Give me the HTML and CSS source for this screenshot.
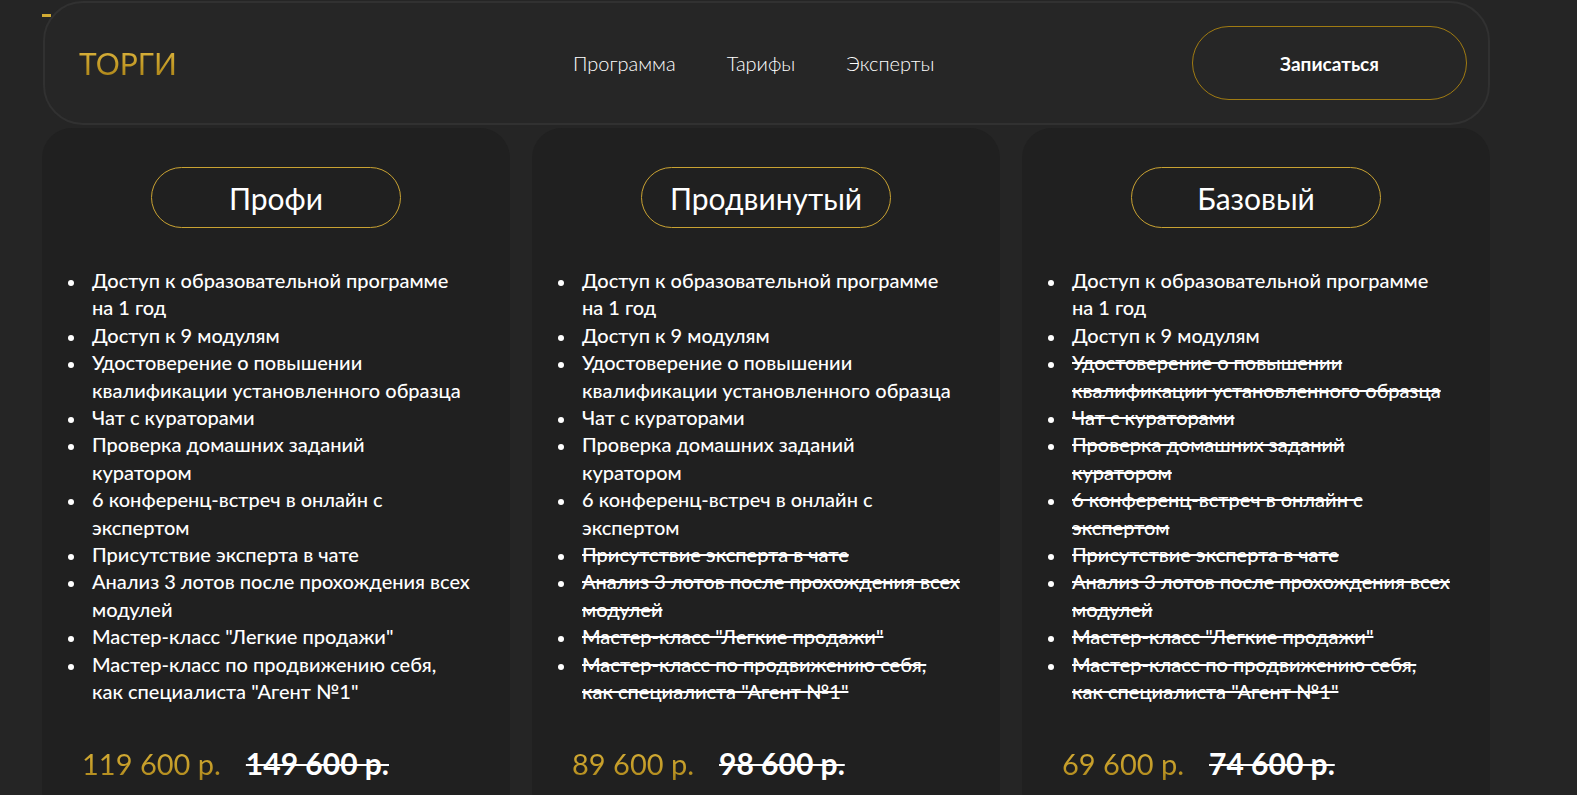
FILE: index.html
```html
<!DOCTYPE html>
<html lang="ru">
<head>
<meta charset="utf-8">
<title>Тарифы</title>
<link rel="stylesheet" href="styles.css">
</head>
<body>
<div class="page">
  <div class="peek"></div>
  <header class="topbar">
    <div class="logo">ТОРГИ</div>
    <nav class="nav">
      <a href="#">Программа</a>
      <a href="#">Тарифы</a>
      <a href="#">Эксперты</a>
    </nav>
    <a class="cta" href="#">Записаться</a>
  </header>

  <section class="plans">
    <article class="plan">
      <div class="plan-title">Профи</div>
      <ul class="features">
        <li>Доступ к образовательной программе<br>на 1 год</li>
        <li>Доступ к 9 модулям</li>
        <li>Удостоверение о повышении<br>квалификации установленного образца</li>
        <li>Чат с кураторами</li>
        <li>Проверка домашних заданий<br>куратором</li>
        <li>6 конференц-встреч в онлайн с<br>экспертом</li>
        <li>Присутствие эксперта в чате</li>
        <li>Анализ 3 лотов после прохождения всех<br>модулей</li>
        <li>Мастер-класс "Легкие продажи"</li>
        <li>Мастер-класс по продвижению себя,<br>как специалиста "Агент №1"</li>
      </ul>
      <div class="price"><span class="now">119 600 р.</span><s class="old">149 600 р.</s></div>
    </article>

    <article class="plan">
      <div class="plan-title">Продвинутый</div>
      <ul class="features">
        <li>Доступ к образовательной программе<br>на 1 год</li>
        <li>Доступ к 9 модулям</li>
        <li>Удостоверение о повышении<br>квалификации установленного образца</li>
        <li>Чат с кураторами</li>
        <li>Проверка домашних заданий<br>куратором</li>
        <li>6 конференц-встреч в онлайн с<br>экспертом</li>
        <li class="off">Присутствие эксперта в чате</li>
        <li class="off">Анализ 3 лотов после прохождения всех<br>модулей</li>
        <li class="off">Мастер-класс "Легкие продажи"</li>
        <li class="off">Мастер-класс по продвижению себя,<br>как специалиста "Агент №1"</li>
      </ul>
      <div class="price"><span class="now">89 600 р.</span><s class="old">98 600 р.</s></div>
    </article>

    <article class="plan">
      <div class="plan-title">Базовый</div>
      <ul class="features">
        <li>Доступ к образовательной программе<br>на 1 год</li>
        <li>Доступ к 9 модулям</li>
        <li class="off">Удостоверение о повышении<br>квалификации установленного образца</li>
        <li class="off">Чат с кураторами</li>
        <li class="off">Проверка домашних заданий<br>куратором</li>
        <li class="off">6 конференц-встреч в онлайн с<br>экспертом</li>
        <li class="off">Присутствие эксперта в чате</li>
        <li class="off">Анализ 3 лотов после прохождения всех<br>модулей</li>
        <li class="off">Мастер-класс "Легкие продажи"</li>
        <li class="off">Мастер-класс по продвижению себя,<br>как специалиста "Агент №1"</li>
      </ul>
      <div class="price"><span class="now">69 600 р.</span><s class="old">74 600 р.</s></div>
    </article>
  </section>
</div>
</body>
</html>
```

FILE: styles.css
```css
* { box-sizing: border-box; }

html, body {
  margin: 0;
  padding: 0;
  background: #252525;
  font-family: Lato, "Noto Sans", "DejaVu Sans", sans-serif;
  color: #ffffff;
  overflow: hidden;
}

.page {
  position: relative;
  width: 1448px;
  margin-left: 42px;
  padding-top: 1px;
}

.peek {
  position: absolute;
  left: 0;
  top: 14px;
  width: 9px;
  height: 3px;
  background: #d2ab33;
  z-index: 0;
}

.topbar {
  position: relative;
  z-index: 1;
  height: 124px;
  margin-left: 1px;
  width: 1447px;
  border: 2px solid #313131;
  border-radius: 40px;
  background: #262626;
  display: flex;
  align-items: center;
  padding: 0 21px 0 34px;
}

.logo {
  width: 494px;
  flex-shrink: 0;
  font-size: 30px;
  font-weight: 400;
  background: linear-gradient(180deg, #dcb53f 0%, #c39a26 55%, #a98318 100%);
  -webkit-background-clip: text;
  background-clip: text;
  color: transparent;
  line-height: 1;
  padding-bottom: 1px;
}

.nav {
  display: flex;
  gap: 51px;
}

.nav a {
  color: #ffffff;
  text-decoration: none;
  font-size: 20px;
  font-weight: 300;
}

.cta {
  margin-left: auto;
  width: 275px;
  height: 74px;
  border: 1px solid #a07b12;
  border-radius: 37px;
  display: flex;
  align-items: center;
  justify-content: center;
  color: #ffffff;
  text-decoration: none;
  font-size: 19px;
  font-weight: 700;
}

.plans {
  margin-top: 3px;
  display: grid;
  grid-template-columns: repeat(3, 1fr);
  gap: 22px;
}

.plan {
  background: #202020;
  border-radius: 30px;
  padding: 39px 0 40px 0;
  display: flex;
  flex-direction: column;
}

.plan-title {
  align-self: center;
  width: 250px;
  height: 61px;
  border: 1px solid #c9a232;
  border-radius: 31px;
  display: flex;
  align-items: center;
  justify-content: center;
  font-size: 30px;
  font-weight: 400;
  color: #ffffff;
}

.features {
  list-style: none;
  margin: 39px 0 0 0;
  padding: 0 0 0 50px;
  font-size: 20px;
  font-weight: 500;
  line-height: 27.4px;
  white-space: nowrap;
}

.features li {
  position: relative;
}

.features li::before {
  content: "";
  position: absolute;
  left: -24px;
  top: 13px;
  width: 6px;
  height: 6px;
  border-radius: 50%;
  background: #ffffff;
}

.features li.off {
  text-decoration: line-through;
  text-decoration-thickness: 2px;
}

.price {
  margin-top: 39px;
  padding-left: 40px;
  display: flex;
  align-items: baseline;
  font-size: 29px;
  line-height: 36px;
}

.price .now {
  background: linear-gradient(180deg, #d8b13a 0%, #c39b27 60%, #a4801a 100%);
  -webkit-background-clip: text;
  background-clip: text;
  color: transparent;
}

.price .old {
  margin-left: 25px;
  font-size: 30px;
  color: #ffffff;
  font-weight: 700;
  text-decoration: line-through;
  text-decoration-thickness: 2px;
}
```
